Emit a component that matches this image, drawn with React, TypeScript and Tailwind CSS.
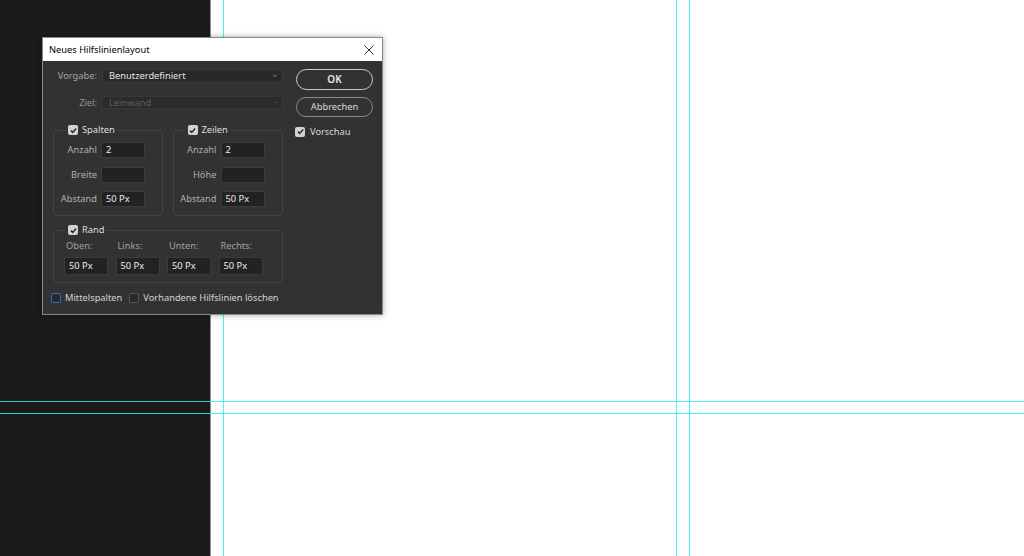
import React from 'react';

function Check({ checked, focus }: { checked?: boolean; focus?: boolean }) {
  if (checked) {
    return (
      <span className="flex h-[10px] w-[10px] shrink-0 items-center justify-center rounded-[2px] bg-[#d2d2d2]">
        <svg viewBox="0 0 10 10" className="h-[9px] w-[9px]">
          <path d="M2.2 5.1 4.2 7.1 7.9 2.9" fill="none" stroke="#2e2e2e" strokeWidth="1.7" />
        </svg>
      </span>
    );
  }
  return (
    <span
      className={
        focus
          ? 'h-[10px] w-[10px] shrink-0 rounded-[2px] border-[1.5px] border-[#2f6ad0] bg-[#282828]'
          : 'h-[10px] w-[10px] shrink-0 rounded-[2px] border border-[#575757] bg-[#282828]'
      }
    />
  );
}

function Field({ value }: { value?: string }) {
  return (
    <div className="h-[16px] w-[44px] shrink-0 border border-[#3b3b3b] bg-[#222222] pl-[4px] leading-[14px] text-[#ececec]">
      {value}
    </div>
  );
}

function Row({ label, value }: { label: string; value?: string }) {
  return (
    <div className="flex items-center">
      <span className="w-[43px] text-right text-[#b0b0b0]">{label}</span>
      <div className="ml-[4px]">
        <Field value={value} />
      </div>
    </div>
  );
}

function Group({ title, rows, width }: { title: string; rows: [string, string?][]; width: string }) {
  return (
    <fieldset className={`${width} h-[92px] rounded-[4px] border border-[#444444]`}>
      <legend className="ml-[11px] px-[3px]">
        <span className="flex items-center gap-[4px] leading-[12px] text-[#dedede]">
          <Check checked />
          {title}
        </span>
      </legend>
      <div className="flex flex-col gap-[8.5px] pt-[6px]">
        {rows.map(([l, v]) => (
          <Row key={l} label={l} value={v} />
        ))}
      </div>
    </fieldset>
  );
}

export default function App() {
  return (
    <div className="relative h-[556px] w-[1024px] overflow-hidden font-['Noto_Sans',sans-serif] text-[9.3px]">
      <div className="flex h-full">
        <div className="w-[211px] border-r border-[#8e8e8e] bg-[#1b1b1b]" />
        <div className="flex-1 bg-white" />
      </div>

      {/* guides */}
      <div className="absolute bottom-0 left-[223px] top-0 w-px bg-[#4df2f2]" />
      <div className="absolute bottom-0 left-[676px] top-0 w-px bg-[#4df2f2]" />
      <div className="absolute bottom-0 left-[689px] top-0 w-px bg-[#4df2f2]" />
      <div className="absolute left-0 right-0 top-[401px] h-px bg-[#2ef0f0]/85" />
      <div className="absolute left-0 right-0 top-[413px] h-px bg-[#2ef0f0]/85" />

      {/* dialog */}
      <div className="absolute left-[42px] top-[37px] w-[341px] border border-[#8a8a8a] bg-[#323232] shadow-[0_0_6px_rgba(0,0,0,0.35)]">
        <div className="flex h-[23px] items-center justify-between bg-white pl-[6px] pr-[8px]">
          <span className="text-black">Neues Hilfslinienlayout</span>
          <svg viewBox="0 0 10 10" className="h-[10px] w-[10px]">
            <path d="M0.5 0.5 9.5 9.5M9.5 0.5 0.5 9.5" stroke="#333" strokeWidth="1" />
          </svg>
        </div>

        <div className="flex gap-[13px] pb-[10px] pl-[10px] pt-[8px]">
          <div className="w-[230px]">
            <div className="flex h-[14px] items-center">
              <span className="w-[44px] text-right text-[#a4a4a4]">Vorgabe:</span>
              <div className="ml-[5px] flex h-[14px] w-[181px] items-center justify-between border border-[#3c3c3c] bg-[#282828] pl-[6px] pr-[4px]">
                <span className="leading-[12px] text-[#e6e6e6]">Benutzerdefiniert</span>
                <svg viewBox="0 0 8 6" className="h-[4px] w-[6px]">
                  <path d="M1 1 4 4 7 1" fill="none" stroke="#9a9a9a" strokeWidth="1.2" />
                </svg>
              </div>
            </div>

            <div className="mt-[13px] flex h-[13px] items-center">
              <span className="w-[44px] text-right text-[#959595]">Ziel:</span>
              <div className="ml-[5px] flex h-[13px] w-[181px] items-center justify-between border border-[#383838] bg-[#2b2b2b] pl-[6px] pr-[4px]">
                <span className="leading-[11px] text-[#5e5e5e]">Leinwand</span>
                <svg viewBox="0 0 8 6" className="h-[4px] w-[6px]">
                  <path d="M1 1 4 4 7 1" fill="none" stroke="#4e4e4e" strokeWidth="1.2" />
                </svg>
              </div>
            </div>

            <div className="mt-[15px] flex gap-[10px]">
              <Group
                title="Spalten"
                width="w-[110px]"
                rows={[
                  ['Anzahl', '2'],
                  ['Breite', ''],
                  ['Abstand', '50 Px'],
                ]}
              />
              <Group
                title="Zeilen"
                width="w-[111px]"
                rows={[
                  ['Anzahl', '2'],
                  ['Höhe', ''],
                  ['Abstand', '50 Px'],
                ]}
              />
            </div>

            <fieldset className="mt-[8px] h-[59px] w-[230px] rounded-[4px] border border-[#444444]">
              <legend className="ml-[11px] px-[3px]">
                <span className="flex items-center gap-[4px] leading-[12px] text-[#dedede]">
                  <Check checked />
                  Rand
                </span>
              </legend>
              <div className="flex gap-[7.5px] pl-[10px] pt-[4px]">
                {['Oben:', 'Links:', 'Unten:', 'Rechts:'].map((l) => (
                  <div key={l} className="flex flex-col">
                    <span className="pl-[2px] leading-[12px] text-[#a0a0a0]">{l}</span>
                    <div className="mt-[5px] h-[18px] w-[44px] border border-[#3b3b3b] bg-[#222222] pl-[4px] leading-[16px] text-[#ececec]">
                      50 Px
                    </div>
                  </div>
                ))}
              </div>
            </fieldset>

            <div className="-ml-[2px] mt-[9px] flex h-[12px] w-[260px] items-center whitespace-nowrap">
              <Check focus />
              <span className="ml-[4px] text-[#d4d4d4]">Mittelspalten</span>
              <span className="ml-[7px] flex">
                <Check />
              </span>
              <span className="ml-[4px] text-[#d4d4d4]">Vorhandene Hilfslinien löschen</span>
            </div>
          </div>

          <div className="flex w-[77px] flex-col">
            <button className="h-[21px] w-[77px] rounded-full border-[1.5px] border-[#cdcdcd] text-[10px] font-semibold text-[#e8e8e8]">
              OK
            </button>
            <button className="mt-[7px] h-[20px] w-[77px] rounded-full border border-[#888888] text-[#dadada]">
              Abbrechen
            </button>
            <div className="-ml-[1px] mt-[8px] flex items-center gap-[5px]">
              <Check checked />
              <span className="text-[#d8d8d8]">Vorschau</span>
            </div>
          </div>
        </div>
      </div>
    </div>
  );
}
